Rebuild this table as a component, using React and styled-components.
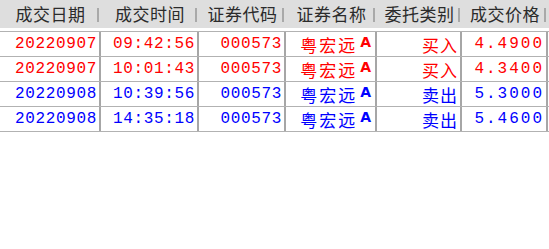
import React from "react";
import styled, { createGlobalStyle } from "styled-components";

const columns = [
  { key: "date", title: "成交日期", width: 101 },
  { key: "time", title: "成交时间", width: 98 },
  { key: "code", title: "证券代码", width: 87 },
  { key: "name", title: "证券名称", width: 91 },
  { key: "type", title: "委托类别", width: 85 },
  { key: "price", title: "成交价格", width: 86 },
];

const trades = [
  { date: "20220907", time: "09:42:56", code: "000573", name: "粤宏远", type: "买入", price: "4.4900", buy: true },
  { date: "20220907", time: "10:01:43", code: "000573", name: "粤宏远", type: "买入", price: "4.3400", buy: true },
  { date: "20220908", time: "10:39:56", code: "000573", name: "粤宏远", type: "卖出", price: "5.3000", buy: false },
  { date: "20220908", time: "14:35:18", code: "000573", name: "粤宏远", type: "卖出", price: "5.4600", buy: false },
];

const gridCols = columns.map((c) => `${c.width}px`).join(" ");

const GlobalStyle = createGlobalStyle`
  html, body {
    margin: 0;
    padding: 0;
    background: #ffffff;
  }
  body {
    width: 549px;
    height: 249px;
    overflow: hidden;
  }
`;

const Page = styled.div`
  width: 549px;
  height: 249px;
  background: #ffffff;
`;

const HeaderRow = styled.div`
  display: grid;
  grid-template-columns: ${gridCols};
  height: 28px;
  background: #dedede;
`;

const HeaderCell = styled.div`
  position: relative;
  display: flex;
  align-items: center;
  justify-content: center;
  padding-bottom: 2px;
  font-family: "Noto Sans CJK SC", sans-serif;
  font-size: 17px;
  color: #2b2b2b;
  letter-spacing: 0.5px;

  &::after {
    content: "";
    position: absolute;
    right: 2px;
    top: 8px;
    width: 2px;
    height: 14px;
    background: #a9a9a9;
  }
`;

const Body = styled.div`
  margin-top: 3px;
  border-top: 1px solid #b2b2b2;
`;

const Row = styled.div`
  display: grid;
  grid-template-columns: ${gridCols};
  height: 25px;
  box-sizing: border-box;
  border-bottom: 1px solid #b2b2b2;
  color: ${(p) => (p.$buy ? "#ff0000" : "#0000ff")};
`;

const Cell = styled.div`
  display: flex;
  align-items: center;
  justify-content: flex-end;
  padding-right: 2px;
  border-right: 2px solid #a6a6a6;
  font-family: ${(p) =>
    p.$cjk ? '"Noto Sans CJK SC", sans-serif' : '"Liberation Mono", monospace'};
  font-size: ${(p) => (p.$cjk ? "17px" : "16px")};
  letter-spacing: ${(p) => p.$spacing || "0.65px"};
  white-space: nowrap;
  overflow: hidden;
`;

const Tag = styled.span`
  font-family: "DejaVu Sans", sans-serif;
  font-weight: bold;
  font-size: 14px;
  margin-left: 3px;
  position: relative;
  top: -2px;
`;

export default function App() {
  return (
    <Page>
      <GlobalStyle />
      <HeaderRow>
        {columns.map((c) => (
          <HeaderCell key={c.key}>{c.title}</HeaderCell>
        ))}
      </HeaderRow>
      <Body>
        {trades.map((t, i) => (
          <Row key={i} $buy={t.buy}>
            <Cell>{t.date}</Cell>
            <Cell>{t.time}</Cell>
            <Cell>{t.code}</Cell>
            <Cell $cjk $spacing="2px">
              {t.name}
              <Tag>A</Tag>
            </Cell>
            <Cell $cjk $spacing="1px">{t.type}</Cell>
            <Cell $spacing="2px">{t.price}</Cell>
          </Row>
        ))}
      </Body>
    </Page>
  );
}
